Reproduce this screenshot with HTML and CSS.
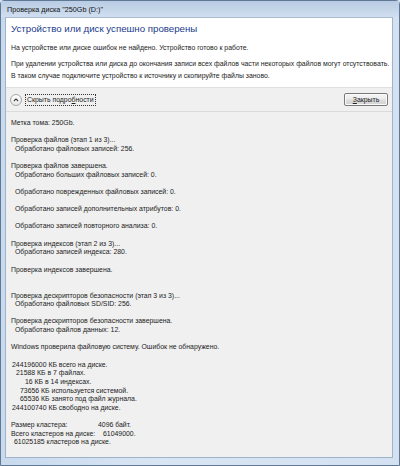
FILE: index.html
```html
<!DOCTYPE html>
<html lang="ru">
<head>
<meta charset="utf-8">
<title>Проверка диска</title>
<link rel="stylesheet" href="styles.css">
</head>
<body>
<div class="window">
  <div class="titlebar">Проверка диска "250Gb (D:)"</div>
  <div class="client">
    <div class="main">
      <div class="heading">Устройство или диск успешно проверены</div>
      <p class="msg">На устройстве или диске ошибок не найдено. Устройство готово к работе.</p>
      <p class="msg gap">При удалении устройства или диска до окончания записи всех файлов части некоторых файлов могут отсутствовать.<br>В таком случае подключите устройство к источнику и скопируйте файлы заново.</p>
    </div>
    <div class="toolbar">
      <div class="toggle">
        <span class="chev"><svg width="12" height="12" viewBox="0 0 12 12"><path d="M3.5 7.2 L6 4.7 L8.5 7.2" fill="none" stroke="#3c3c3c" stroke-width="1.3"/></svg></span>
        <span class="toggle-label">Скрыть подро<u>б</u>ности</span>
      </div>
      <button class="btn"><u>З</u>акрыть</button>
    </div>
    <div class="details">
      <div class="ln">Метка тома: 250Gb.</div>
      <div class="ln"></div>
      <div class="ln">Проверка файлов (этап 1 из 3)...</div>
      <div class="ln in4">Обработано файловых записей: 256.</div>
      <div class="ln"></div>
      <div class="ln">Проверка файлов завершена.</div>
      <div class="ln in4">Обработано больших файловых записей: 0.</div>
      <div class="ln"></div>
      <div class="ln in4">Обработано поврежденных файловых записей: 0.</div>
      <div class="ln"></div>
      <div class="ln in4">Обработано записей дополнительных атрибутов: 0.</div>
      <div class="ln"></div>
      <div class="ln in4">Обработано записей повторного анализа: 0.</div>
      <div class="ln"></div>
      <div class="ln">Проверка индексов (этап 2 из 3)...</div>
      <div class="ln in4">Обработано записей индекса: 280.</div>
      <div class="ln"></div>
      <div class="ln">Проверка индексов завершена.</div>
      <div class="ln"></div>
      <div class="ln"></div>
      <div class="ln">Проверка дескрипторов безопасности (этап 3 из 3)...</div>
      <div class="ln in4">Обработано файловых SD/SID: 256.</div>
      <div class="ln"></div>
      <div class="ln">Проверка дескрипторов безопасности завершена.</div>
      <div class="ln in4">Обработано файлов данных: 12.</div>
      <div class="ln"></div>
      <div class="ln">Windows проверила файловую систему. Ошибок не обнаружено.</div>
      <div class="ln"></div>
      <div class="ln in1">244196000 КБ всего на диске.</div>
      <div class="ln in5">21588 КБ в 7 файлах.</div>
      <div class="ln in14">16 КБ в 14 индексах.</div>
      <div class="ln in9">73656 КБ используется системой.</div>
      <div class="ln in9">65536 КБ занято под файл журнала.</div>
      <div class="ln in1">244100740 КБ свободно на диске.</div>
      <div class="ln"></div>
      <div class="ln"><span class="lbl w1">Размер кластера:</span>4096 байт.</div>
      <div class="ln"><span class="lbl w2">Всего кластеров на диске:</span>61049000.</div>
      <div class="ln in3">61025185 кластеров на диске.</div>
    </div>
  </div>
</div>
</body>
</html>
```
FILE: styles.css
```css
* { box-sizing: border-box; }
html, body { margin: 0; padding: 0; }
body {
  width: 400px;
  height: 466px;
  overflow: hidden;
  font-family: "Liberation Sans", Arial, sans-serif;
  color: #222;
  background: #dce7f3;
}
.window {
  width: 400px;
  height: 466px;
  display: flex;
  flex-direction: column;
  border: 1px solid #5f7894;
  border-radius: 4px 4px 0 0;
  background: linear-gradient(to right, #c9daee 0%, #d8e5f3 40%, #d3e1f1 100%);
  padding: 0 6px 7px 4px;
}
.titlebar {
  height: 16px;
  flex: none;
  font-size: 7.2px;
  line-height: 16px;
  padding-top: 1px;
  color: #111;
  background: linear-gradient(to bottom, #b9cce4 0%, #c7d7ea 60%, #d0def0 100%);
  margin: 0 -6px 0 -4px;
  padding-left: 6px;
}
.client {
  flex: 1;
  display: flex;
  flex-direction: column;
  background: #f0f0f0;
  border: 1px solid #9fb3cb;
  border-top-color: #a9bcd3;
  min-height: 0;
}
.main {
  background: #ffffff;
  padding: 5px 6px 5px 5px;
  border-bottom: 1px solid #dfdfdf;
}
.heading {
  font-size: 9.7px;
  line-height: 12px;
  color: #1a3a8c;
}
.msg {
  margin: 7px 0 0 0;
  font-size: 6.9px;
  line-height: 12px;
  white-space: nowrap;
}
.msg.gap { margin-top: 4px; }
.toolbar {
  height: 24px;
  flex: none;
  display: flex;
  align-items: center;
  justify-content: space-between;
  padding: 0 4px 0 4px;
  border-bottom: 1px solid #dadada;
}
.toggle {
  display: flex;
  align-items: center;
  gap: 3px;
}
.chev {
  width: 12px;
  height: 12px;
  border-radius: 50%;
  border: 1px solid #a5a5a5;
  background: linear-gradient(to bottom, #ffffff, #e6e6e6);
  display: flex;
  align-items: center;
  justify-content: center;
}
.chev svg { display: block; }
.toggle-label {
  font-size: 6.9px;
  line-height: 10px;
  padding: 0 1px;
  border: 1px dotted #333;
}
.btn {
  width: 44px;
  height: 13px;
  padding: 0;
  font-family: inherit;
  font-size: 6.9px;
  line-height: 11px;
  color: #222;
  border: 1px solid #7a7a7a;
  border-radius: 2px;
  background: linear-gradient(to bottom, #f6f6f6 0%, #ebebeb 48%, #dddddd 52%, #d3d3d3 100%);
  box-shadow: inset 0 0 0 1px #fafafa;
}
.details {
  padding: 6.7px 5px 0 5px;
  font-size: 6.9px;
}
.ln {
  height: 8.65px;
  line-height: 8.65px;
  white-space: nowrap;
}
.in1 { padding-left: 1px; }
.in3 { padding-left: 3px; }
.in4 { padding-left: 4px; }
.in5 { padding-left: 5px; }
.in9 { padding-left: 9px; }
.in14 { padding-left: 14px; }
.lbl { display: inline-block; }
.w1 { width: 87px; }
.w2 { width: 92px; }
```
